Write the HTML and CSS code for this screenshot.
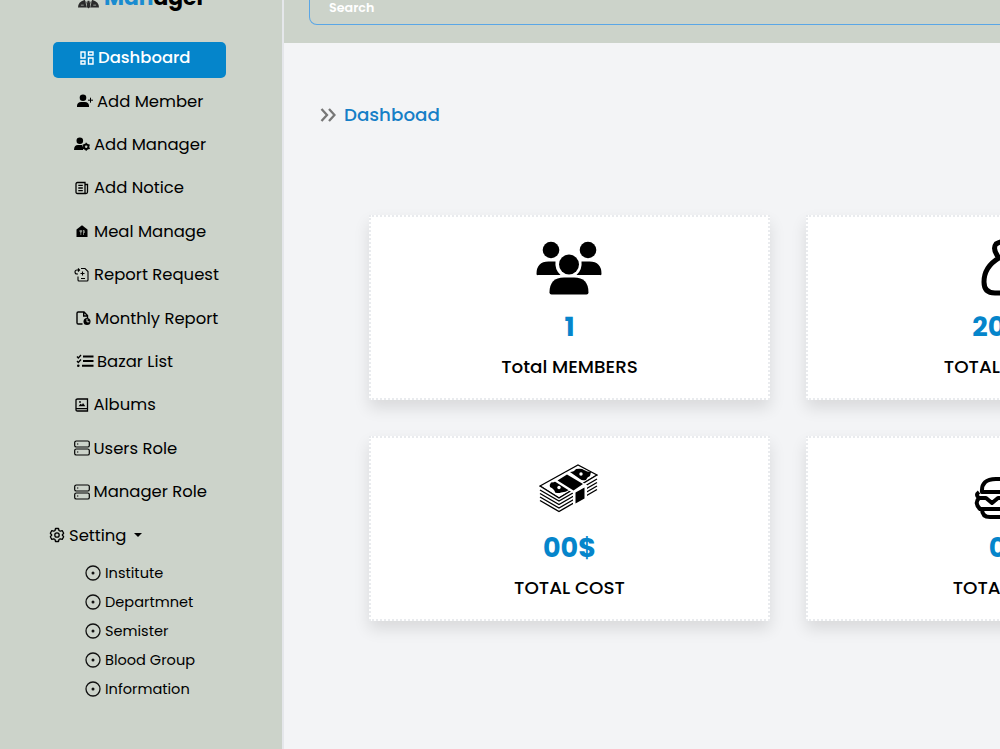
FILE: index.html
```html
<!DOCTYPE html>
<html lang="en">
<head>
  <meta charset="UTF-8">
  <meta name="viewport" content="width=device-width, initial-scale=1.0">
  <title>Meal Manager</title>
  <link rel="stylesheet" href="styles.css">
</head>
<body>
  <div class="layout">
    <aside class="sidebar">
      <div class="brand">
        <svg class="brand-icon" viewBox="0 0 22 22"><circle cx="11" cy="6" r="5"/><path d="M0 21q0-6 7-8l4 4 4-4q7 2 7 8z"/><path d="M8 13l1.500 8M14 13l-1.500 8" fill="none" stroke="#ccd3ca" stroke-width=".8"/><path d="M10 14h2l.8 6-1.800 2-1.800-2z"/><path d="M3 18.500h3M16 18.500h3" stroke="#ccd3ca" stroke-width=".7"/></svg>
        <span class="brand-name"><span class="blue">Man</span>ager</span>
      </div>

      <nav class="menu">
        <a class="item active"><svg viewBox="0 0 16 16" fill="none" stroke="currentColor" stroke-width="1.400"><path d="M2 2h4v6H2zM9.500 2H14v3H9.500zM9.500 8H14v6H9.500zM2 11h4v3H2z"/></svg><span>Dashboard</span></a>
        <a class="item member"><svg viewBox="0 0 16 16"><circle cx="6" cy="4.700" r="3.300"/><path d="M0 14v-1.500Q.5 9 4 9h4q3.500 0 4 3.500V14z"/><path d="M13.500 4.700v5M11 7.200h5" stroke="currentColor" stroke-width="1"/></svg><span>Add Member</span></a>
        <a class="item manager"><svg viewBox="0 0 16 16"><circle cx="5.800" cy="4.700" r="3.300"/><path d="M0 14q0-5 4-5h4l1 2v3z"/><circle cx="12.200" cy="10.700" r="2.300" fill="none" stroke="currentColor" stroke-width="1.800"/><path d="M12.200 6.700v8M8.700 8.700l7 4M8.700 12.700l7-4" stroke="currentColor" stroke-width="1.300"/><circle cx="12.200" cy="10.700" r="1.200" fill="#ccd3ca"/></svg><span>Add Manager</span></a>
        <a class="item notice"><svg viewBox="0 0 16 16" fill="none" stroke="currentColor" stroke-width="1.300"><path d="M3.500 2.500H11v11H3.500Q2 13.500 2 12V4Q2 2.500 3.500 2.500zM11 4.500h2.500V12q0 1.500-1.500 1.500h-2M4.300 5.300h4.500M4.300 8h4.500M4.300 10.700h4.500"/></svg><span>Add Notice</span></a>
        <a class="item meal"><svg viewBox="0 0 16 16"><path d="M2.500 14V6.500L8 2.300l5.500 4.200V14z"/><path d="M6 7v2h1.700V7M6.800 7v5M9.500 12V7q1 .3 1 2.500h-1" fill="none" stroke="#ccd3ca" stroke-width=".6"/></svg><span>Meal Manage</span></a>
        <a class="item request"><svg viewBox="0 0 16 16" fill="none" stroke="currentColor" stroke-width="1.100"><path d="M7 1.500h4l3 3V13q0 1-1 1H5q-1 0-1-1V9.500M8.500 4.500v4M6.500 6.500h4M7 11.500h4M5.500 3H3Q1 3 1 5t2 2h1M4 1.500L5.500 3 4 4.500"/></svg><span>Report Request</span></a>
        <a class="item monthly"><svg viewBox="0 0 16 16" fill="none" stroke="currentColor" stroke-width="1.400"><path d="M7.500 14H3.200Q2 14 2 12.800V3.200Q2 2 3.200 2H9l3.500 3.500V8M8.700 2v4h3.800"/><circle cx="12" cy="11.500" r="3.500" fill="currentColor" stroke="none"/><path d="M12 9v2.800h2.300" stroke="#ccd3ca" stroke-width="1"/></svg><span>Monthly Report</span></a>
        <a class="item bazar"><svg viewBox="0 0 18 16" fill="none" stroke="currentColor"><path d="M7 3.500h10.500M7 8h10.500M6 12.700h11.500" stroke-width="1.900"/><path d="M1 3.500L2.300 5 5 2M1 8l1.300 1.500L5 6.500" stroke-width="1.300"/><circle cx="2.300" cy="12.700" r="1.300" fill="currentColor" stroke="none"/></svg><span>Bazar List</span></a>
        <a class="item albums"><svg viewBox="0 0 16 16" fill="none" stroke="currentColor" stroke-width="1.300"><path d="M3.500 2h10v12h-10Q2 14 2 12.700V3.200Q2 2 3.500 2zM2 11.700h11.500"/><path d="M4.500 9.200l2-2.500 1.500 1 1-1.700 2.300 3.200z" fill="currentColor" stroke="none"/><circle cx="6" cy="5" r=".9" fill="currentColor" stroke="none"/></svg><span>Albums</span></a>
        <a class="item role"><svg viewBox="0 0 16 16" fill="none" stroke="currentColor" stroke-width="1.200"><rect x=".7" y="1" width="14.600" height="6" rx="1.600"/><rect x=".7" y="9" width="14.600" height="6" rx="1.600"/><path d="M3 4h1.300M3 12h1.300"/></svg><span>Users Role</span></a>
        <a class="item role"><svg viewBox="0 0 16 16" fill="none" stroke="currentColor" stroke-width="1.200"><rect x=".7" y="1" width="14.600" height="6" rx="1.600"/><rect x=".7" y="9" width="14.600" height="6" rx="1.600"/><path d="M3 4h1.300M3 12h1.300"/></svg><span>Manager Role</span></a>
        <a class="item setting"><svg viewBox="0 0 16 16" fill="none" stroke="currentColor" stroke-width="1.300" stroke-linejoin="round"><path d="M6.500 1.500h3l.5 2 1.200.7 2-.6 1.500 2.600L13.300 8l1.400 1.800-1.500 2.600-2-.6-1.200.7-.5 2h-3l-.5-2-1.200-.7-2 .6-1.500-2.600L2.700 8 1.300 6.200l1.500-2.600 2 .6L6 3.500z"/><circle cx="8" cy="8" r="2.200"/></svg><span>Setting</span><i class="caret"></i></a>
      </nav>

      <div class="submenu">
        <a><svg viewBox="0 0 16 16"><circle cx="8" cy="8" r="7"/><circle class="dot" cx="8" cy="8" r="1.500"/></svg><span>Institute</span></a>
        <a><svg viewBox="0 0 16 16"><circle cx="8" cy="8" r="7"/><circle class="dot" cx="8" cy="8" r="1.500"/></svg><span>Departmnet</span></a>
        <a><svg viewBox="0 0 16 16"><circle cx="8" cy="8" r="7"/><circle class="dot" cx="8" cy="8" r="1.500"/></svg><span>Semister</span></a>
        <a><svg viewBox="0 0 16 16"><circle cx="8" cy="8" r="7"/><circle class="dot" cx="8" cy="8" r="1.500"/></svg><span>Blood Group</span></a>
        <a><svg viewBox="0 0 16 16"><circle cx="8" cy="8" r="7"/><circle class="dot" cx="8" cy="8" r="1.500"/></svg><span>Information</span></a>
      </div>
    </aside>

    <main class="main">
      <header class="topbar">
        <div class="search">Search</div>
      </header>

      <h1 class="page-title">
        <svg viewBox="0 0 16 14"><path d="M1.500 1l5.500 6-5.500 6M9 1l5.500 6L9 13"/></svg>
        <span>Dashboad</span>
      </h1>

      <section class="cards">
        <div class="card">
          <svg class="card-icon" viewBox="0 0 66 54"><circle cx="15" cy="9" r="8.300"/><circle cx="52" cy="9" r="8.300"/><path d="M.5 33q0-12.500 12-12.500h7q-1 8 5 13.500H2Q.5 34.500.5 33zM65.500 33q0-12.500-12-12.500h-8q1 8-5 13.500H64q1.500.5 1.500-1z"/><circle cx="33" cy="23.500" r="10"/><path d="M13.500 51.500Q13.500 36.500 28 36.500h10q14.500 0 14.500 15 0 2-2 2h-35q-2 0-2-2z"/></svg>
          <div class="number">1</div>
          <div class="label">Total MEMBERS</div>
        </div>
        <div class="card">
          <svg class="card-icon line" viewBox="0 0 66 54"><path d="M26 17q-7-9-3-14 5-3 10-3t10 3q4 5-3 14zM26 17Q11 26 11 41q0 11 11 11h22q11 0 11-11 0-15-15-24"/></svg>
          <div class="number">200$</div>
          <div class="label">TOTAL MONEY</div>
        </div>
        <div class="card">
          <svg class="card-icon money" viewBox="0 0 66 54">
            <path d="M4 24L42 3l19 10-38 23z" fill="#fff" stroke="#000" stroke-width="1.300"/>
            <path d="M4 24v15l19 11 38-22V13L23 36z" fill="#fff"/>
            <path d="M4 24l19 12 38-23M4 28l19 11 38-22M4 31.500l19 11 38-22M4 35l19 11 38-22M4 38.500l19 11 38-22" fill="none" stroke="#000" stroke-width="1.400"/>
            <path d="M14 25q-1-2 1-4.500 3 0 5-1.500 7-1 13 5v4q-3 2-8 2.500-2 1-6 0 0-3-5-5.500zM34 10q4 0 6-3 6-1 8 1 3 2 7 2l-1 4q-3 1-4 4-4 1-6-1z"/>
            <circle cx="23" cy="25.500" r="1.700" fill="#fff"/><circle cx="45" cy="12" r="1.700" fill="#fff"/>
            <path d="M18 19l12-8.500L51 23v14l-14 8V31z" fill="#fff"/>
            <path d="M21.500 18.500l9.500-6 16 9.500-9.500 6.500zM39.500 30.500l9-5v11l-9 5z"/>
          </svg>
          <div class="number">00$</div>
          <div class="label">TOTAL COST</div>
        </div>
        <div class="card">
          <svg class="card-icon line burger" viewBox="0 0 66 54"><path d="M9 30Q8 17 23 17h20q15 0 14 13zM6 30q-4 3 0 6-5 5 1 11h52q6-6 1-11 4-3 0-6M5 36h8l6 5 6-5h36M9 47q0 8 8 8h32q8 0 8-8"/></svg>
          <div class="number">0$</div>
          <div class="label">TOTAL MEAL</div>
        </div>
      </section>
    </main>
  </div>
</body>
</html>
```
FILE: styles.css
```css
* {
  box-sizing: border-box;
}

body {
  margin: 0;
  overflow: hidden;
  font-family: Poppins, Inter, "Open Sans", sans-serif;
  background-color: #f3f4f6;
  color: #000;
}

.layout {
  display: flex;
  width: 1244px;
  height: 749px;
}

.sidebar {
  flex: none;
  width: 284px;
  background-color: #ccd3ca;
  border-right: 2px solid #e5e7eb;
}

/* the brand row is scrolled half out of view */
.brand {
  display: flex;
  align-items: center;
  gap: 5px;
  height: 36px;
  margin-top: -19px;
  padding-left: 78px;
}

.brand-icon {
  width: 21px;
  height: 22px;
  margin-bottom: 3px;
  fill: #2b2b2b;
}

.brand-name {
  margin-bottom: 3px;
  font-size: 21.800px;
  font-weight: 700;
  line-height: 36px;
}

.blue {
  color: #1a8cd0;
}

.menu {
  display: flex;
  flex-direction: column;
  gap: 7px;
  padding-top: 24.500px;
}

.item {
  display: flex;
  align-items: center;
  gap: 4px;
  width: 173px;
  height: 36.400px;
  margin-left: 53px;
  padding: 0 0 4px 21px;
  border-radius: 5px;
  font-size: 16.450px;
  white-space: nowrap;
}

.item svg {
  flex: none;
  width: 16px;
  height: 16px;
  fill: currentColor;
}

.item svg[fill="none"] {
  fill: none;
}

.item.active {
  padding-left: 26px;
  gap: 3px;
  background-color: #0585cb;
  color: #fff;
  font-weight: 500;
}

.item.member {
  padding-left: 24px;
}

.item.monthly {
  padding-left: 22px;
}

.item.bazar {
  padding-left: 23px;
  gap: 3px;
}

.item.bazar svg {
  width: 18px;
}

.item.albums,
.item.role {
  padding-left: 20.500px;
}

.item.setting {
  margin-left: 49px;
  padding: 0 0 3px;
}

.caret {
  margin-left: 4px;
  border: 4px solid transparent;
  border-top-color: #000;
  border-bottom: 0;
}

.submenu {
  display: flex;
  flex-direction: column;
  padding: 3.500px 0 0 85px;
}

.submenu a {
  display: flex;
  align-items: center;
  gap: 4px;
  height: 29px;
  font-size: 14.550px;
}

.submenu svg {
  width: 16px;
  height: 16px;
  fill: none;
  stroke: #111;
  stroke-width: 1.300;
}

.submenu .dot {
  fill: #111;
  stroke: none;
}

.main {
  flex: 1;
  min-width: 0;
}

.topbar {
  height: 43px;
  padding: 0 0 18px 25px;
  background-color: #ccd3ca;
}

.search {
  height: 25px;
  padding-left: 19px;
  border: 1px solid #5aa6e6;
  border-top: 0;
  border-radius: 0 0 8px 8px;
  color: #fff;
  font-size: 12.700px;
  font-weight: 600;
  line-height: 15px;
}

.page-title {
  display: flex;
  align-items: center;
  gap: 8px;
  height: 30px;
  margin: 56px 0 0 36px;
  color: #167fc7;
  font-size: 18.300px;
  font-weight: 500;
}

.page-title svg {
  width: 16px;
  height: 14px;
  margin-top: 1px;
  fill: none;
  stroke: #777;
  stroke-width: 2.300;
}

.cards {
  display: grid;
  grid-template-columns: 401px 401px;
  gap: 36px;
  padding: 86px 0 0 85px;
}

.card {
  display: flex;
  flex-direction: column;
  align-items: center;
  height: 185px;
  padding-top: 24px;
  border: 2px dotted #e9ebee;
  background-color: #fff;
  box-shadow: 0 8px 15px rgba(0, 0, 0, 0.11);
}

.card-icon {
  width: 66px;
  height: 54px;
  margin-left: -1px;
  overflow: visible;
}

.card-icon.line {
  fill: none;
  stroke: #000;
  stroke-width: 5;
  stroke-linejoin: round;
}

.card-icon.burger {
  stroke-width: 4;
}

.number {
  margin-top: 11px;
  color: #0585cb;
  font-size: 27px;
  font-weight: 700;
  line-height: 42px;
}

.label {
  margin-top: 5px;
  font-size: 18.350px;
  font-weight: 500;
  line-height: 28px;
}
```
